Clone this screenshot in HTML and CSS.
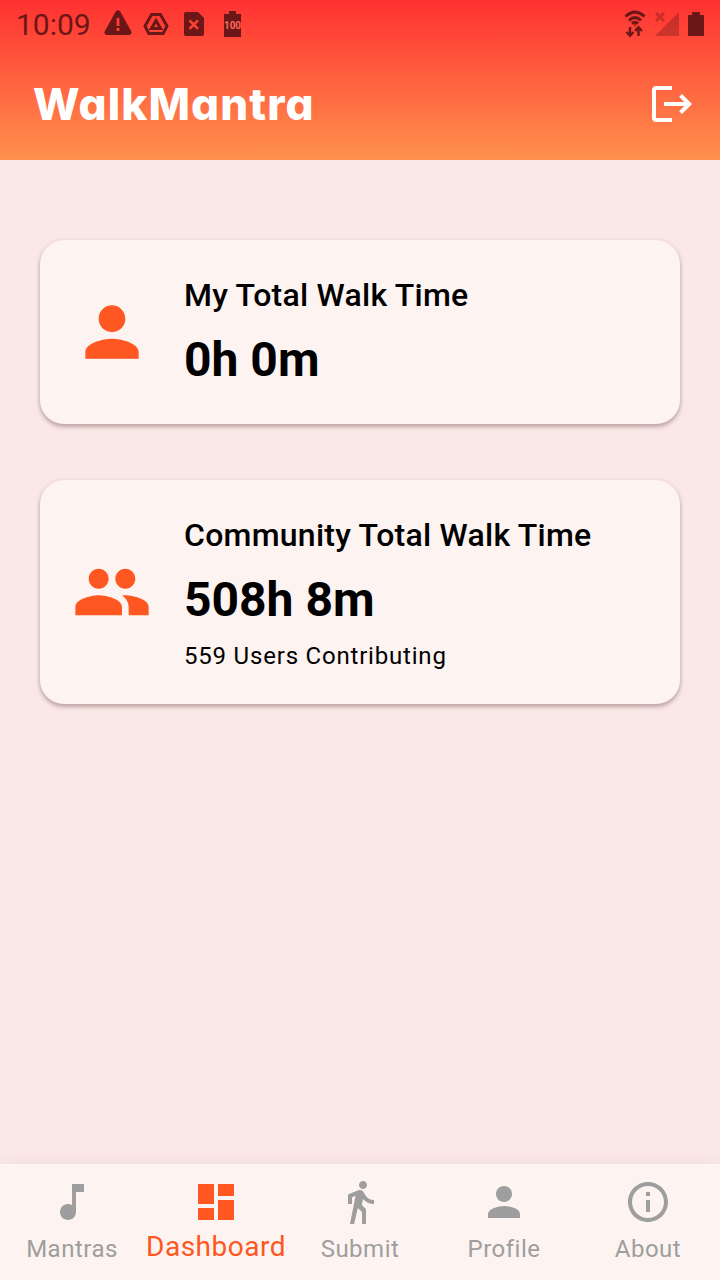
FILE: index.html
```html
<!DOCTYPE html>
<html lang="en">

<head>
    <meta charset="UTF-8">
    <meta name="viewport" content="width=device-width, initial-scale=1.0">
    <title>WalkMantra</title>
    <link rel="stylesheet" href="styles.css">
</head>

<body>
    <div class="page">
        <header class="header">
            <div class="status">
                <div class="status-left">
                    <span class="time">10:09</span>
                    <svg class="ic-warn" width="28" height="26" viewBox="0 0 28 26">
                        <path fill-rule="evenodd" d="M11.9 1.3Q14 -1 16.1 1.3L27.4 21.5Q28.4 24.8 25 25H3Q-.4 24.8.6 21.5ZM12.6 8v8h2.8V8zM12.6 18v3h2.8v-3z" />
                    </svg>
                    <svg class="ic-drive" width="26" height="24" viewBox="0 0 26 24">
                        <path class="line" d="M8.6 2.5h8.8L24 14l-3.8 7.5H5.8L2 14z" />
                        <path class="line" d="M13 8.5l4.6 8H8.4z" />
                    </svg>
                    <svg class="ic-sim" width="20" height="24" viewBox="0 0 20 24">
                        <path d="M2 0h12l6 6v16q0 2-2 2H2q-2 0-2-2V2q0-2 2-2z" />
                        <path class="cross" d="M5.5 8.3l8.5 8.5M14 8.3l-8.5 8.5" />
                    </svg>
                    <svg class="ic-full" width="17" height="26" viewBox="0 0 17 26">
                        <path d="M5 0h7v3h5v23H0V3h5z" />
                        <text class="percent" x="8.5" y="18">100</text>
                    </svg>
                </div>
                <div class="status-right">
                    <svg width="22" height="28" viewBox="0 0 22 28">
                        <path class="line" d="M1.5 6.5Q11-2.2 20.5 6.5M5 10.500Q11 4.700 17 10.500" />
                        <path class="line" d="M8 13.500Q11 11 14 13.500" />
                        <path d="M9.500 14.500h3L11 16.500z" />
                        <path class="line arrows" d="M6 17v8.5M2.5 22L6 25.7 9.5 22M14.5 26v-8.5M11 21l3.5-3.7L18 21" />
                    </svg>
                    <svg class="ic-signal" width="24" height="26" viewBox="0 0 24 26">
                        <path d="M24 1v24H0z" />
                        <path class="line" d="M1 2l8 8M9 2l-8 8" />
                    </svg>
                    <svg width="16" height="24" viewBox="0 0 16 24">
                        <path d="M4 0h8v3h3q1 0 1 1v19q0 1-1 1H1q-1 0-1-1V4q0-1 1-1h3z" />
                    </svg>
                </div>
            </div>
            <div class="title-bar">
                <h1 class="title">WalkMantra</h1>
                <svg class="logout" viewBox="0 0 24 24">
                    <path d="M17 7l-1.41 1.41L18.17 11H8v2h10.17l-2.58 2.58L17 17l5-5zM4 5h8V3H4c-1.1 0-2 .9-2 2v14c0 1.1.9 2 2 2h8v-2H4V5z" />
                </svg>
            </div>
        </header>

        <main class="main">
            <section class="card">
                <svg class="card-icon" viewBox="0 0 24 24">
                    <path d="M12 12c2.21 0 4-1.79 4-4s-1.79-4-4-4-4 1.79-4 4 1.79 4 4 4zm0 2c-2.67 0-8 1.34-8 4v2h16v-2c0-2.66-5.33-4-8-4z" />
                </svg>
                <div class="card-text">
                    <div class="card-title">My Total Walk Time</div>
                    <div class="card-value">0h 0m</div>
                </div>
            </section>
            <section class="card">
                <svg class="card-icon" viewBox="0 0 24 24">
                    <path d="M16 11c1.66 0 2.99-1.34 2.99-3S17.66 5 16 5c-1.66 0-3 1.34-3 3s1.34 3 3 3zm-8 0c1.66 0 2.99-1.34 2.99-3S9.66 5 8 5C6.34 5 5 6.34 5 8s1.34 3 3 3zm0 2c-2.33 0-7 1.17-7 3.5V19h14v-2.5c0-2.33-4.67-3.5-7-3.5zm8 0c-.29 0-.62.02-.97.05 1.16.84 1.97 1.97 1.97 3.45V19h6v-2.5c0-2.33-4.67-3.5-7-3.5z" />
                </svg>
                <div class="card-text">
                    <div class="card-title">Community Total Walk Time</div>
                    <div class="card-value">508h 8m</div>
                    <div class="card-note">559 Users Contributing</div>
                </div>
            </section>
        </main>

        <nav class="nav">
            <a class="nav-item">
                <svg viewBox="0 0 24 24">
                    <path d="M12 3v10.55c-.59-.34-1.27-.55-2-.55-2.21 0-4 1.79-4 4s1.79 4 4 4 4-1.79 4-4V7h4V3h-6z" />
                </svg>
                <span>Mantras</span>
            </a>
            <a class="nav-item active">
                <svg viewBox="0 0 24 24">
                    <path d="M3 13h8V3H3v10zm0 8h8v-6H3v6zm10 0h8V11h-8v10zm0-18v6h8V3h-8z" />
                </svg>
                <span>Dashboard</span>
            </a>
            <a class="nav-item">
                <svg viewBox="0 0 24 24">
                    <path d="M13.5 5.5c1.1 0 2-.9 2-2s-.9-2-2-2-2 .9-2 2 .9 2 2 2zM9.800 8.900L7 23h2.100l1.800-8 2.100 2v6h2v-7.500l-2.100-2 .6-3C14.800 12 16.800 13 19 13v-2c-1.900 0-3.500-1-4.300-2.400l-1-1.600c-.4-.6-1-1-1.700-1-.3 0-.5.1-.8.1L6 8.300V13h2V9.600l1.800-.7" />
                </svg>
                <span>Submit</span>
            </a>
            <a class="nav-item">
                <svg viewBox="0 0 24 24">
                    <path d="M12 12c2.21 0 4-1.79 4-4s-1.79-4-4-4-4 1.79-4 4 1.79 4 4 4zm0 2c-2.67 0-8 1.34-8 4v2h16v-2c0-2.66-5.33-4-8-4z" />
                </svg>
                <span>Profile</span>
            </a>
            <a class="nav-item">
                <svg viewBox="0 0 24 24">
                    <path d="M11 7h2v2h-2zm0 4h2v6h-2zm1-9C6.48 2 2 6.48 2 12s4.48 10 10 10 10-4.48 10-10S17.52 2 12 2zm0 18c-4.41 0-8-3.59-8-8s3.59-8 8-8 8 3.59 8 8-3.59 8-8 8z" />
                </svg>
                <span>About</span>
            </a>
        </nav>
    </div>
</body>

</html>
```
FILE: styles.css
```css
* {
    box-sizing: border-box;
}

body {
    margin: 0;
    font-family: Roboto, "Liberation Sans", sans-serif;
    color: #000;
}

.page {
    width: 720px;
    height: 1280px;
    display: flex;
    flex-direction: column;
    overflow: hidden;
    background: #fae8e6;
}

svg {
    display: block;
    flex: none;
    fill: currentColor;
}

/* header */
.header {
    height: 160px;
    background: linear-gradient(#ff3131, #ff914d);
}

.status {
    height: 48px;
    padding: 0 16px;
    display: flex;
    justify-content: space-between;
    align-items: center;
    color: #6b1717;
}

.status-left,
.status-right {
    display: flex;
    align-items: center;
}

.status-right {
    gap: 9px;
}

.time {
    width: 88px;
    font-size: 30px;
    line-height: 48px;
    padding-top: 2px;
}

.ic-warn {
    margin-bottom: 2px;
}

.ic-drive {
    margin-left: 11px;
}

.ic-sim {
    margin-left: 15px;
}

.ic-full {
    margin-left: 20px;
}

.line {
    fill: none;
    stroke: currentColor;
    stroke-width: 3;
}

.arrows {
    stroke-width: 2.4;
}

.cross {
    stroke: #ff4034;
    stroke-width: 2.6;
}

.percent {
    fill: #ff6a5c;
    font-size: 10px;
    font-weight: 700;
    text-anchor: middle;
}

.ic-signal {
    opacity: 0.35;
}

.title-bar {
    height: 112px;
    padding: 0 24px 0 33px;
    display: flex;
    justify-content: space-between;
    align-items: center;
    color: #fff;
}

.title {
    margin: 0;
    font-family: Inter, "Open Sans", sans-serif;
    font-size: 44px;
    font-weight: 800;
    line-height: 64px;
    letter-spacing: 1.1px;
    font-feature-settings: "cv11";
}

.logout {
    width: 48px;
    height: 48px;
}

/* cards */
.main {
    flex: 1;
    padding: 80px 40px;
    display: flex;
    flex-direction: column;
    gap: 56px;
}

.card {
    padding: 32px;
    display: flex;
    align-items: center;
    gap: 32px;
    border-radius: 24px;
    background: #fdf3f0;
    box-shadow: 0 3px 4px rgba(60, 20, 20, 0.26), 0 1px 5px rgba(60, 20, 20, 0.12);
}

.card-icon {
    width: 80px;
    height: 80px;
    color: #ff5722;
}

.card-text {
    display: flex;
    flex-direction: column;
    white-space: nowrap;
}

.card-title {
    font-size: 32px;
    font-weight: 500;
    line-height: 46px;
    margin-bottom: 10px;
    letter-spacing: 0.25px;
}

.card-value {
    font-size: 48px;
    font-weight: 700;
    line-height: 64px;
}

.card-note {
    margin-top: 8px;
    font-size: 24px;
    line-height: 32px;
    letter-spacing: 0.8px;
}

/* bottom navigation */
.nav {
    height: 116px;
    padding-top: 14px;
    display: grid;
    grid-template-columns: repeat(5, 1fr);
    background: #fdf3f0;
    box-shadow: 0 -2px 16px rgba(120, 40, 60, 0.05);
}

.nav-item {
    display: flex;
    flex-direction: column;
    align-items: center;
    color: #9e9e9e;
    font-size: 24px;
    line-height: 32px;
    letter-spacing: 0.5px;
}

.nav-item svg {
    width: 48px;
    height: 48px;
}

.nav-item span {
    margin-top: 7px;
}

.active {
    color: #ff5722;
    font-size: 28px;
}

.active span {
    margin-top: 5px;
}
```
